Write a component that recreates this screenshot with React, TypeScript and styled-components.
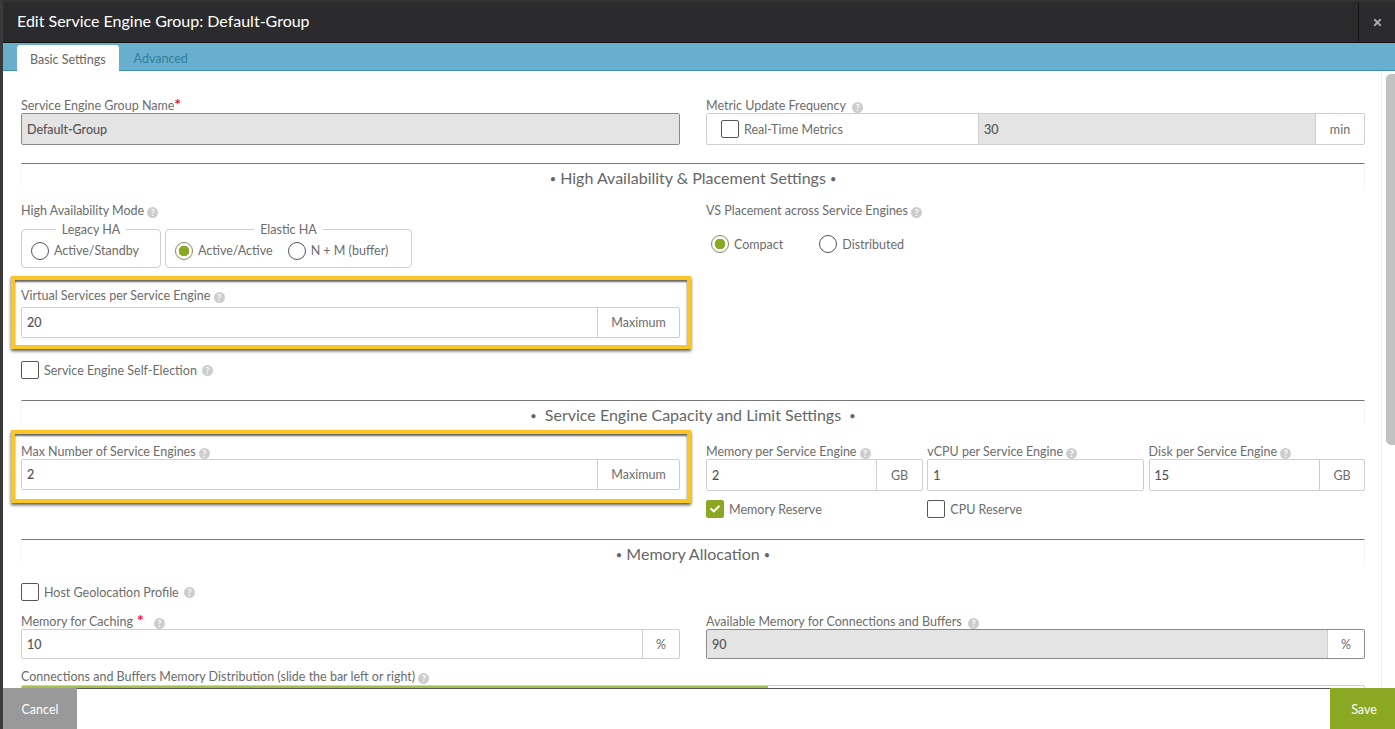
import React from "react";
import styled, { createGlobalStyle } from "styled-components";
import { FaCheck, FaTimes } from "react-icons/fa";

const GlobalStyle = createGlobalStyle`
  html, body {
    margin: 0;
    height: 100%;
    overflow: hidden;
    background: #fff;
  }
  * {
    box-sizing: border-box;
  }
`;

const Help = () => <HelpIcon>?</HelpIcon>;

const Required = () => <Star>*</Star>;

const App = () => {
  return (
    <Modal>
      <GlobalStyle />
      <Header>
        <Title>Edit Service Engine Group: Default-Group</Title>
        <CloseButton>
          <FaTimes />
        </CloseButton>
      </Header>
      <TabBar>
        <Tab active>Basic Settings</Tab>
        <Tab>Advanced</Tab>
      </TabBar>
      <Body>
        <Content>
          <Row top={27}>
            <Field>
              <Label>
                Service Engine Group Name
                <Required />
              </Label>
              <InputGroup disabled>
                <Value grey>Default-Group</Value>
              </InputGroup>
            </Field>
            <Field>
              <Label>
                Metric Update Frequency &nbsp;<Help />
              </Label>
              <InputGroup>
                <MetricCell>
                  <CheckLine>
                    <Checkbox />
                    Real-Time Metrics
                  </CheckLine>
                </MetricCell>
                <Value grey>30</Value>
                <Addon width={49}>min</Addon>
              </InputGroup>
            </Field>
          </Row>

          <Section top={18}>
            <Dot>•</Dot> High Availability &amp; Placement Settings <Dot>•</Dot>
          </Section>

          <Row top={16}>
            <Field>
              <Label>
                High Availability Mode <Help />
              </Label>
              <Fieldsets>
                <Group width={140}>
                  <Legend>Legacy HA</Legend>
                  <RadioLine>
                    <Radio />
                    Active/Standby
                  </RadioLine>
                </Group>
                <Group width={247}>
                  <Legend>Elastic HA</Legend>
                  <RadioLine>
                    <Radio on />
                    Active/Active
                    <Spacer />
                    <Radio />
                    N + M (buffer)
                  </RadioLine>
                </Group>
              </Fieldsets>
            </Field>
            <Field>
              <Label>
                VS Placement across Service Engines <Help />
              </Label>
              <PlacementLine>
                <Radio on />
                Compact
                <PlacementGap />
                <Radio />
                Distributed
              </PlacementLine>
            </Field>
          </Row>

          <Highlight top={8} pad={8}>
            <Label>
              Virtual Services per Service Engine <Help />
            </Label>
            <HighlightInput>
              <Value>20</Value>
              <Addon width={82}>Maximum</Addon>
            </HighlightInput>
          </Highlight>

          <SingleCheck top={12}>
            <Checkbox />
            Service Engine Self-Election <Help />
          </SingleCheck>

          <Section top={21}>
            <Dot>•</Dot>&nbsp; Service Engine Capacity and Limit Settings &nbsp;<Dot>•</Dot>
          </Section>

          <Row top={0}>
            <Highlight top={6} pad={10}>
              <Label>
                Max Number of Service Engines <Help />
              </Label>
              <SnugInput>
                <Value>2</Value>
                <Addon width={82}>Maximum</Addon>
              </SnugInput>
            </Highlight>
            <Triple>
              <Field>
                <Label>
                  Memory per Service Engine <Help />
                </Label>
                <InputGroup>
                  <Value>2</Value>
                  <Addon width={46}>GB</Addon>
                </InputGroup>
                <CheckBelow>
                  <Checkbox checked>
                    <FaCheck />
                  </Checkbox>
                  Memory Reserve
                </CheckBelow>
              </Field>
              <Field>
                <Label>
                  vCPU per Service Engine <Help />
                </Label>
                <InputGroup>
                  <Value>1</Value>
                </InputGroup>
                <CheckBelow>
                  <Checkbox />
                  CPU Reserve
                </CheckBelow>
              </Field>
              <Field>
                <Label>
                  Disk per Service Engine <Help />
                </Label>
                <InputGroup>
                  <Value>15</Value>
                  <Addon width={45}>GB</Addon>
                </InputGroup>
              </Field>
            </Triple>
          </Row>

          <Section top={21}>
            <Dot>•</Dot> Memory Allocation <Dot>•</Dot>
          </Section>

          <SingleCheck top={20}>
            <Checkbox />
            Host Geolocation Profile <Help />
          </SingleCheck>

          <Row top={13}>
            <Field>
              <Label>
                Memory for Caching
                <CachingStar>*</CachingStar>
                <Help />
              </Label>
              <CompactInput>
                <Value>10</Value>
                <Addon width={37}>%</Addon>
              </CompactInput>
            </Field>
            <Field>
              <Label>
                Available Memory for Connections and Buffers &nbsp;<Help />
              </Label>
              <CompactInput disabled>
                <Value grey>90</Value>
                <Addon width={37}>%</Addon>
              </CompactInput>
            </Field>
          </Row>

          <SliderLabel>
            Connections and Buffers Memory Distribution (slide the bar left or right) <Help />
          </SliderLabel>
          <Slider>
            <SliderFill style={{ width: `${(747 / 1344) * 100}%` }} />
          </Slider>
        </Content>
        <ScrollTrack>
          <ScrollThumb />
        </ScrollTrack>
      </Body>
      <Footer>
        <CancelButton>Cancel</CancelButton>
        <SaveButton>Save</SaveButton>
      </Footer>
    </Modal>
  );
};

const Modal = styled.div`
  height: 729px;
  display: flex;
  flex-direction: column;
  border-left: 3px solid #3a3a3a;
  border-top: 2px solid #333;
  font-family: Lato, "Open Sans", sans-serif;
  font-size: 12.5px;
  color: #6c6c6c;
  background: #fff;
  overflow: hidden;
`;

const Header = styled.div`
  flex: none;
  height: 41px;
  display: flex;
  align-items: center;
  justify-content: space-between;
  background: #2b2b2d;
  border-bottom: 1px solid #111;
`;

const Title = styled.div`
  padding: 0 0 4px 14px;
  font-size: 16px;
  color: #fff;
`;

const CloseButton = styled.div`
  width: 37px;
  height: 38px;
  display: flex;
  align-items: center;
  justify-content: center;
  border-left: 1px solid #111;
  color: #aaa;
  font-size: 11px;
`;

const TabBar = styled.div`
  flex: none;
  height: 28px;
  display: flex;
  align-items: flex-end;
  gap: 15px;
  padding-left: 14px;
  background: #68afcd;
  border-bottom: 1px solid #3f8fb0;
`;

const Tab = styled.div<{ active?: boolean }>`
  height: 26px;
  margin-bottom: ${({ active }) => (active ? "-1px" : "0")};
  padding: 0 13px;
  line-height: 30px;
  border-radius: 3px 3px 0 0;
  background: ${({ active }) => (active ? "#fff" : "transparent")};
  color: ${({ active }) => (active ? "#666" : "#2f7f9f")};
  ${({ active }) => !active && "padding-left: 0;"}
`;

const Body = styled.div`
  flex: 1;
  min-height: 0;
  display: flex;
  overflow: hidden;
`;

const Content = styled.div`
  flex: 1;
  min-width: 0;
  padding: 0 16px 0 18px;
`;

const Row = styled.div<{ top: number }>`
  display: grid;
  grid-template-columns: 659px 659px;
  column-gap: 26px;
  margin-top: ${({ top }) => top}px;
`;

const Field = styled.div`
  min-width: 0;
`;

const Label = styled.div`
  height: 15px;
  line-height: 15px;
  white-space: nowrap;
`;

const HelpIcon = styled.span`
  display: inline-block;
  width: 11px;
  height: 11px;
  border-radius: 50%;
  background: #cdcdcd;
  color: #fff;
  font-size: 9px;
  font-weight: 700;
  line-height: 11px;
  text-align: center;
  vertical-align: -0.5px;
`;

const Star = styled.span`
  color: #e8141c;
  font-size: 16px;
  font-weight: 700;
  line-height: 10px;
`;

const CachingStar = styled(Star)`
  margin: 0 10px 0 4px;
`;

const InputGroup = styled.div<{ disabled?: boolean }>`
  height: 32px;
  display: flex;
  border: 1px solid ${({ disabled }) => (disabled ? "#8a8a8a" : "#cfcfcf")};
  border-radius: 2px;
  background: #fff;
`;

const HighlightInput = styled(InputGroup)`
  height: 31px;
  margin-top: 4px;
`;

const SnugInput = styled(InputGroup)`
  height: 31px;
`;

const CompactInput = styled(InputGroup)`
  height: 30px;
`;

const Value = styled.div<{ grey?: boolean }>`
  flex: 1;
  min-width: 0;
  padding-left: 5px;
  display: flex;
  align-items: center;
  color: #555;
  -webkit-text-stroke: 0.15px #555;
  background: ${({ grey }) => (grey ? "#e4e4e4" : "#fff")};
`;

const Addon = styled.div<{ width: number }>`
  flex: none;
  width: ${({ width }) => width}px;
  display: flex;
  align-items: center;
  justify-content: center;
  border-left: 1px solid #cfcfcf;
`;

const MetricCell = styled.div`
  flex: none;
  width: 272px;
  display: flex;
  align-items: center;
  padding-left: 14px;
  border-right: 1px solid #cfcfcf;
`;

const CheckLine = styled.div`
  display: flex;
  align-items: center;
  gap: 5px;
`;

const Checkbox = styled.div<{ checked?: boolean }>`
  flex: none;
  width: 18px;
  height: 18px;
  display: flex;
  align-items: center;
  justify-content: center;
  border: 1px solid ${({ checked }) => (checked ? "#8aa824" : "#555")};
  border-radius: 2px;
  background: ${({ checked }) => (checked ? "#8aa824" : "#fff")};
  color: #fff;
  font-size: 10px;
`;

const Section = styled.div<{ top: number }>`
  height: 24px;
  margin-top: ${({ top }) => top}px;
  width: 1344px;
  border-top: 1px solid #777;
  border-left: 1px solid #f6f6f6;
  border-right: 1px solid #f6f6f6;
  text-align: center;
  font-size: 16px;
  line-height: 28px;
  color: #666;
`;

const Dot = styled.span`
  font-size: 11px;
  vertical-align: 1px;
`;

const Fieldsets = styled.div`
  display: flex;
  gap: 4px;
  margin-top: 3px;
`;

const Group = styled.div<{ width: number }>`
  position: relative;
  width: ${({ width }) => width}px;
  height: 39px;
  margin-top: 8px;
  border: 1px solid #cfcfcf;
  border-radius: 4px;
`;

const Legend = styled.div`
  position: absolute;
  top: -8px;
  left: 0;
  right: 0;
  width: max-content;
  margin: 0 auto;
  padding: 0 6px;
  background: #fff;
  line-height: 15px;
`;

const RadioLine = styled.div`
  height: 100%;
  padding: 4px 0 0 9px;
  display: flex;
  align-items: center;
  gap: 5px;
`;

const Spacer = styled.div`
  width: 5px;
`;

const Radio = styled.div<{ on?: boolean }>`
  flex: none;
  width: 18px;
  height: 18px;
  border: 1px solid ${({ on }) => (on ? "#7d8c5a" : "#555")};
  border-radius: 50%;
  background: ${({ on }) =>
    on ? "radial-gradient(circle, #8aa824 0 5px, #fff 5.6px)" : "#fff"};
`;

const PlacementLine = styled.div`
  display: flex;
  align-items: center;
  gap: 5px;
  margin-top: 17px;
  padding-left: 5px;
`;

const PlacementGap = styled.div`
  width: 26px;
`;

const Highlight = styled.div<{ top: number; pad: number }>`
  width: 680px;
  height: 73px;
  margin: ${({ top }) => top}px 0 0 -10px;
  padding: ${({ pad }) => pad}px 7px 0 6px;
  border: 4px solid #f8c627;
  box-shadow: 0 2px 3px #555, inset 0 2px 2px #666;
  background: #fff;
`;

const SingleCheck = styled.div<{ top: number }>`
  display: flex;
  align-items: center;
  gap: 5px;
  margin-top: ${({ top }) => top}px;
`;

const Triple = styled.div`
  display: grid;
  grid-template-columns: 217px 217px 1fr;
  column-gap: 4.3px;
  margin-top: 20px;
`;

const CheckBelow = styled.div`
  display: flex;
  align-items: center;
  gap: 5px;
  margin-top: 9px;
`;

const SliderLabel = styled.div`
  margin-top: 10px;
  height: 15px;
  line-height: 15px;
  white-space: nowrap;
`;

const Slider = styled.div`
  width: 1344px;
  height: 30px;
  margin-top: 1px;
  border: 1px solid #cfcfcf;
  border-radius: 2px;
`;

const SliderFill = styled.div`
  height: 100%;
  background: #a3c14a;
`;

const ScrollTrack = styled.div`
  flex: none;
  width: 14px;
  padding: 3px 0 0 4px;
  border-left: 1px solid #eee;
`;

const ScrollThumb = styled.div`
  height: 371px;
  border-radius: 5px 0 0 5px;
  background: #c2c2c2;
`;

const Footer = styled.div`
  flex: none;
  height: 41px;
  display: flex;
  justify-content: space-between;
  border-top: 1px solid #555;
  background: #fff;
`;

const CancelButton = styled.div`
  width: 74px;
  margin-top: -1px;
  padding-top: 2px;
  display: flex;
  align-items: center;
  justify-content: center;
  background: #999;
  color: #fff;
`;

const SaveButton = styled.div`
  width: 65px;
  margin-top: -1px;
  padding: 2px 0 0 3px;
  display: flex;
  align-items: center;
  justify-content: center;
  background: #8aa824;
  color: #fff;
`;

export default App;
